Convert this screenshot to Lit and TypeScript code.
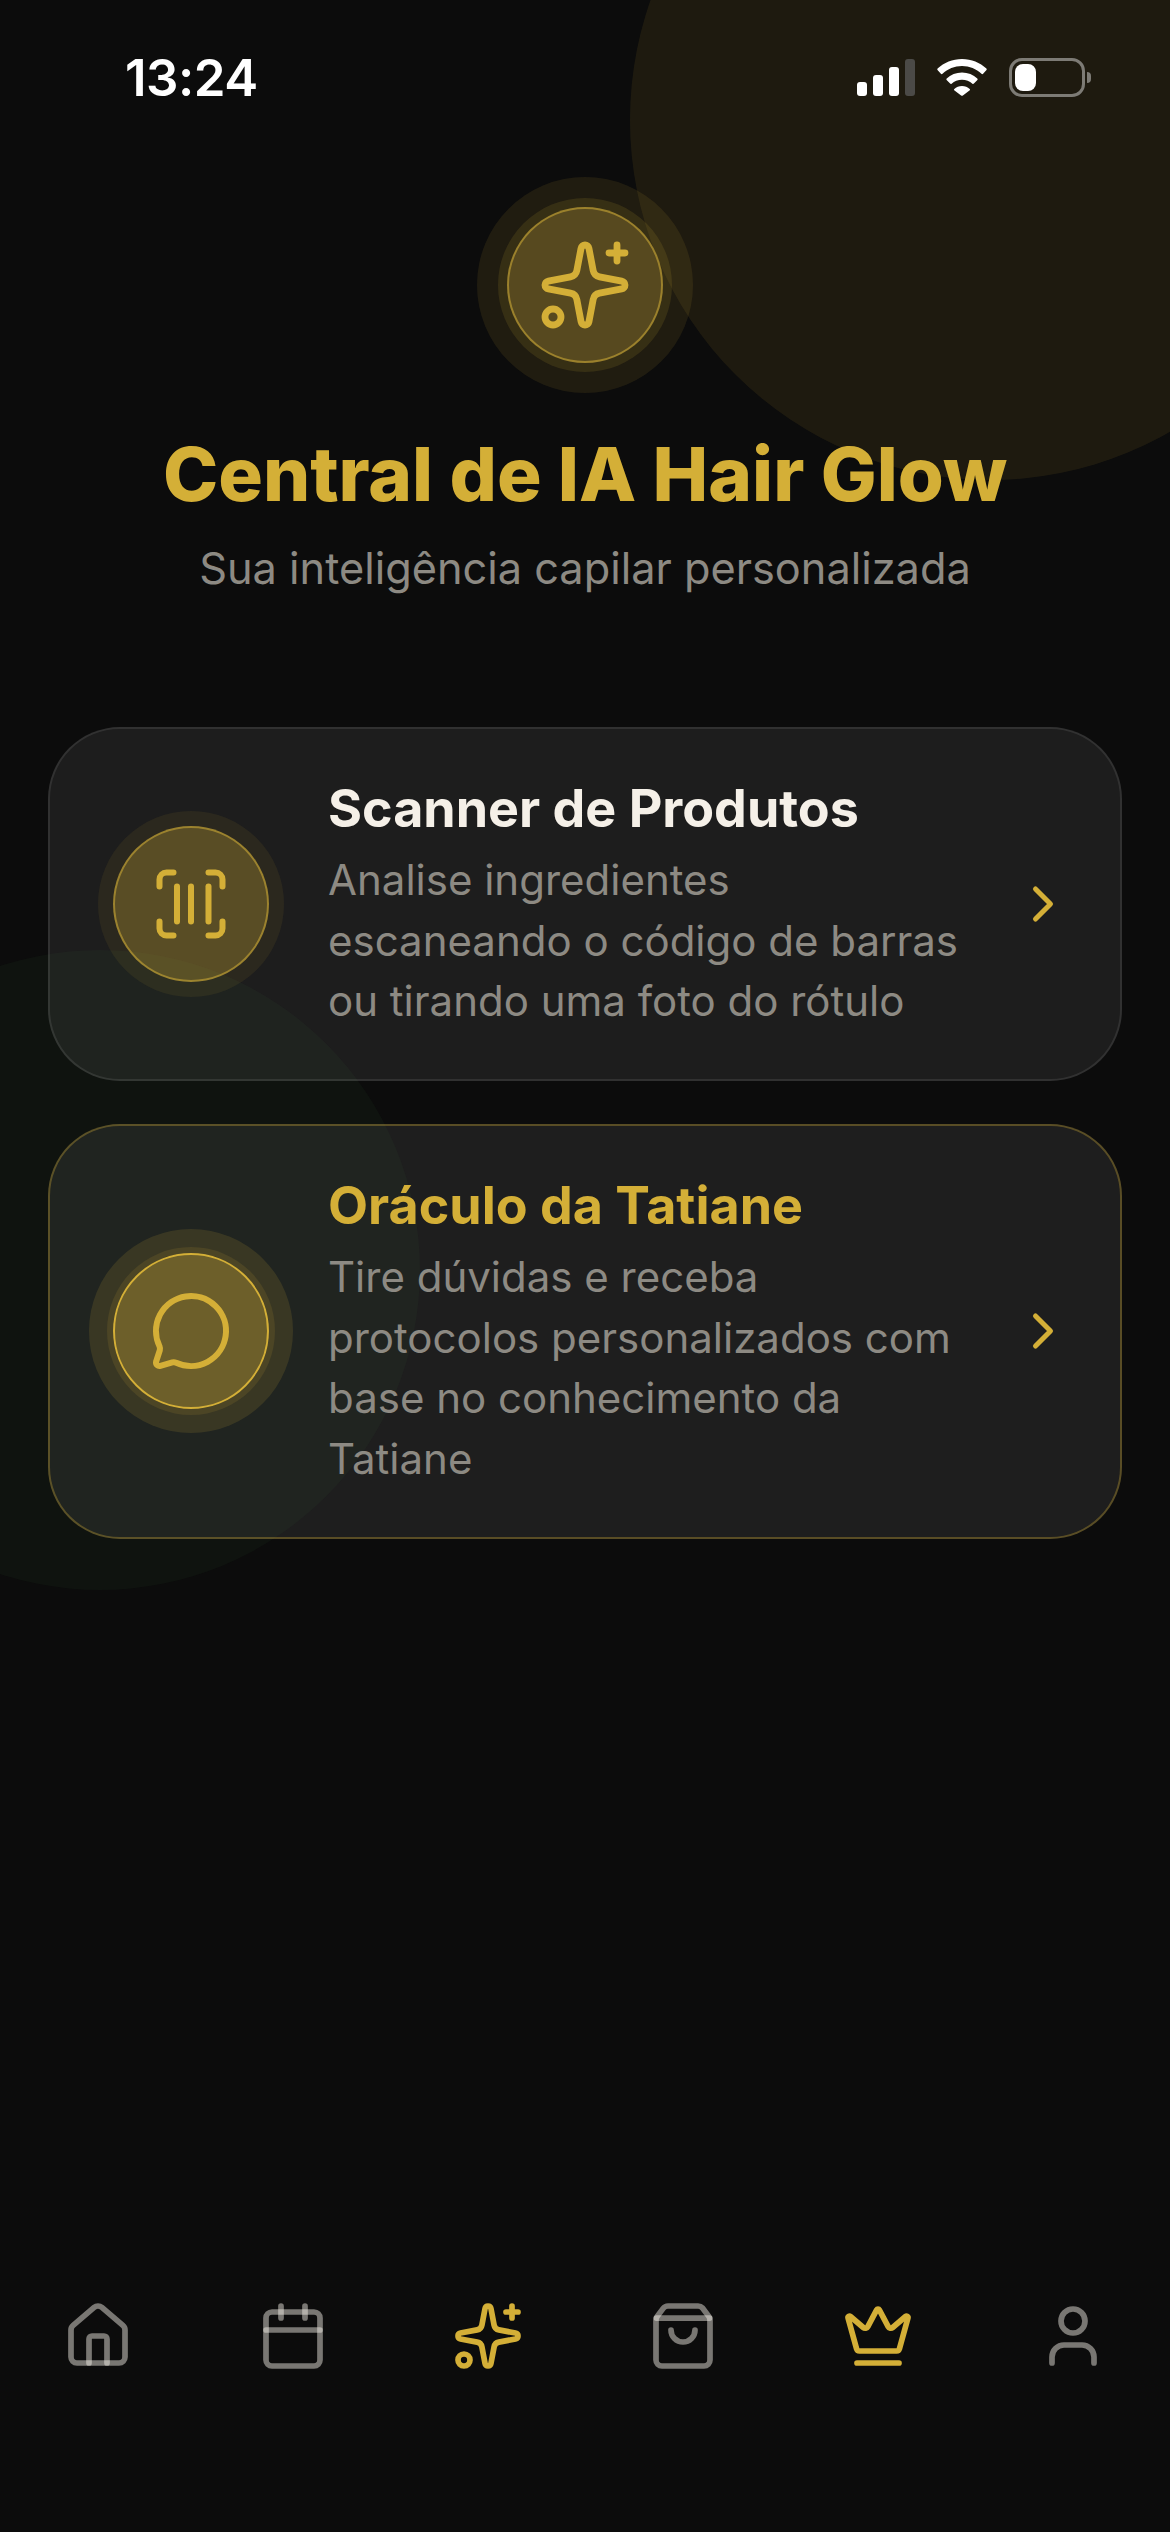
import { LitElement, html, css, svg } from "lit";
import { customElement } from "lit/decorators.js";

const sparkles = svg`<path d="M11.017 2.814a1 1 0 0 1 1.966 0l1.051 5.558a2 2 0 0 0 1.594 1.594l5.558 1.051a1 1 0 0 1 0 1.966l-5.558 1.051a2 2 0 0 0-1.594 1.594l-1.051 5.558a1 1 0 0 1-1.966 0l-1.051-5.558a2 2 0 0 0-1.594-1.594l-5.558-1.051a1 1 0 0 1 0-1.966l5.558-1.051a2 2 0 0 0 1.594-1.594z"/><path d="M20 2v4"/><path d="M22 4h-4"/><circle cx="4" cy="20" r="2"/>`;
const scan = svg`<path d="M3 7V5a2 2 0 0 1 2-2h2"/><path d="M17 3h2a2 2 0 0 1 2 2v2"/><path d="M21 17v2a2 2 0 0 1-2 2h-2"/><path d="M7 21H5a2 2 0 0 1-2-2v-2"/><path d="M8 7v10"/><path d="M12 7v10"/><path d="M17 7v10"/>`;
const chat = svg`<path d="M2.992 16.342a2 2 0 0 1 .094 1.167l-1.065 3.29a1 1 0 0 0 1.236 1.168l3.413-.998a2 2 0 0 1 1.099.092 10 10 0 1 0-4.777-4.719"/>`;
const chevron = svg`<path d="m9 18 6-6-6-6"/>`;
const house = svg`<path d="M15 21v-8a1 1 0 0 0-1-1h-4a1 1 0 0 0-1 1v8"/><path d="M3 10a2 2 0 0 1 .709-1.528l7-6a2 2 0 0 1 2.582 0l7 6A2 2 0 0 1 21 10v9a2 2 0 0 1-2 2H5a2 2 0 0 1-2-2z"/>`;
const calendar = svg`<path d="M8 2v4"/><path d="M16 2v4"/><rect width="18" height="18" x="3" y="4" rx="2"/><path d="M3 10h18"/>`;
const bag = svg`<path d="M16 10a4 4 0 0 1-8 0"/><path d="M3.103 6.034h17.794"/><path d="M3.4 5.467a2 2 0 0 0-.4 1.2V20a2 2 0 0 0 2 2h14a2 2 0 0 0 2-2V6.667a2 2 0 0 0-.4-1.2l-2.1-2.8A2 2 0 0 0 17 2H7a2 2 0 0 0-1.6.8z"/>`;
const crown = svg`<path d="M11.562 3.266a.5.5 0 0 1 .876 0L15.39 8.87a1 1 0 0 0 1.516.294L21.183 5.5a.5.5 0 0 1 .798.519l-2.834 10.246a1 1 0 0 1-.956.734H5.81a1 1 0 0 1-.957-.734L2.02 6.02a.5.5 0 0 1 .798-.519l4.276 3.664a1 1 0 0 0 1.516-.294z"/><path d="M5 21h14"/>`;
const user = svg`<path d="M19 21v-2a4 4 0 0 0-4-4H9a4 4 0 0 0-4 4v2"/><circle cx="12" cy="7" r="4"/>`;

const icon = (body: unknown, cls: string) =>
  html`<svg class=${cls} viewBox="0 0 24 24" fill="none" stroke-linecap="round" stroke-linejoin="round">${body}</svg>`;

@customElement("app-root")
export class AppRoot extends LitElement {
  static styles = css`
    :host {
      display: block;
    }
    .screen {
      position: relative;
      width: 1170px;
      height: 2532px;
      overflow: hidden;
      background: #0c0c0c;
      font-family: Inter, "Liberation Sans", sans-serif;
      display: flex;
      flex-direction: column;
    }
    .blob {
      position: absolute;
      border-radius: 50%;
    }
    .blob-gold {
      left: 630px;
      top: -240px;
      width: 720px;
      height: 720px;
      background: rgba(212, 175, 55, 0.095);
    }
    .blob-green {
      left: -220px;
      top: 950px;
      width: 640px;
      height: 640px;
      background: rgba(50, 110, 60, 0.075);
    }
    .status {
      position: relative;
      height: 154px;
      flex: none;
      box-sizing: border-box;
      padding: 55px 79px 0 125px;
      display: flex;
      justify-content: space-between;
      align-items: flex-start;
      color: #fff;
    }
    .time {
      font-size: 51px;
      line-height: 46px;
      font-weight: 600;
      letter-spacing: -0.5px;
    }
    .indicators {
      display: flex;
      align-items: center;
      padding-top: 3px;
    }
    .signal {
      display: flex;
      align-items: flex-end;
      gap: 6px;
      height: 37px;
    }
    .signal i {
      display: block;
      width: 10px;
      background: #fff;
      border-radius: 3px;
    }
    .signal i.off {
      background: #4b4a47;
    }
    .wifi {
      width: 50px;
      height: 37px;
      margin-left: 22px;
    }
    .battery {
      display: flex;
      align-items: center;
      margin-left: 22px;
    }
    .cell {
      box-sizing: border-box;
      width: 76px;
      height: 39px;
      border: 3px solid #7d7b75;
      border-radius: 13px;
      padding: 3px;
    }
    .cell b {
      display: block;
      width: 21px;
      height: 27px;
      background: #fff;
      border-radius: 8px;
    }
    .nub {
      width: 4px;
      height: 11px;
      margin-left: 2px;
      background: #7d7b75;
      border-radius: 0 6px 6px 0;
    }
    .hero {
      position: relative;
      display: flex;
      flex-direction: column;
      align-items: center;
      padding-top: 53px;
    }
    .badge {
      box-sizing: border-box;
      display: flex;
      align-items: center;
      justify-content: center;
      border-radius: 50%;
      flex: none;
      width: 156px;
      height: 156px;
    }
    .badge-hero {
      border: 2px solid rgba(212, 175, 55, 0.55);
      background: #57491f;
      box-shadow: 0 0 0 9px rgba(212, 175, 55, 0.13), 0 0 0 30px rgba(212, 175, 55, 0.1);
    }
    .badge-scan {
      border: 2px solid rgba(212, 175, 55, 0.55);
      background: rgba(212, 175, 55, 0.33);
      box-shadow: 0 0 0 15px rgba(212, 175, 55, 0.08);
    }
    .badge-chat {
      border: 2px solid #d4af37;
      background: rgba(212, 175, 55, 0.43);
      box-shadow: 0 0 0 6px rgba(212, 175, 55, 0.12), 0 0 0 24px rgba(212, 175, 55, 0.14);
    }
    svg {
      stroke: #d4af37;
      flex: none;
      display: block;
    }
    .i-hero {
      width: 96px;
      height: 96px;
      stroke-width: 1.7;
    }
    .i-card {
      width: 84px;
      height: 84px;
      stroke-width: 1.72;
    }
    .i-chev {
      width: 60px;
      height: 60px;
      stroke-width: 2;
    }
    .i-nav {
      width: 72px;
      height: 72px;
      stroke-width: 1.9;
      stroke: rgba(245, 240, 232, 0.47);
    }
    .i-nav-on {
      width: 72px;
      height: 72px;
      stroke-width: 1.9;
    }
    h1 {
      margin: 68px 0 0;
      font-size: 74.4px;
      line-height: 86px;
      font-weight: 800;
      color: #d4af37;
    }
    .sub {
      margin: 26px 0 0;
      font-size: 43.3px;
      line-height: 50px;
      color: #8d8a83;
    }
    .cards {
      position: relative;
      display: flex;
      flex-direction: column;
      gap: 43px;
      padding: 134px 48px 0;
    }
    .card {
      display: flex;
      align-items: center;
      padding: 47.25px 47px 47.25px 63px;
      border-radius: 72px;
      background: rgba(255, 255, 255, 0.07);
      border: 2px solid rgba(255, 255, 255, 0.09);
    }
    .card.on {
      border-color: rgba(212, 175, 55, 0.33);
      background: rgba(255, 255, 255, 0.075);
    }
    .copy {
      flex: 1;
      min-width: 0;
      margin: 0 46px 0 59px;
    }
    h2 {
      margin: 0 0 8px;
      font-size: 52px;
      line-height: 66px;
      font-weight: 700;
      color: #f5f0e8;
    }
    .on h2 {
      color: #d4af37;
    }
    .copy p {
      margin: 0;
      font-size: 42px;
      line-height: 60.5px;
      color: #8d8a83;
    }
    nav {
      position: relative;
      margin-top: auto;
      display: grid;
      grid-template-columns: repeat(6, 1fr);
      justify-items: center;
      padding-bottom: 160px;
    }
  `;

  render() {
    return html`<div class="screen">
      <div class="blob blob-gold"></div>
      <div class="blob blob-green"></div>

      <div class="status">
        <span class="time">13:24</span>
        <div class="indicators">
          <div class="signal">
            <i style="height:14px"></i><i style="height:21px"></i><i style="height:29px"></i><i class="off" style="height:37px"></i>
          </div>
          <svg class="wifi" viewBox="0 0 50 37" style="stroke:none">
            <path fill="#fff" d="M25 0C15.500 0 7 3.600.6 9.600c-.5.500-.5 1-.1 1.500l3.400 3.700c.5.500 1.100.500 1.600 0C10.700 10 17.500 7.100 25 7.100s14.300 2.900 19.500 7.700c.5.500 1.100.500 1.600 0l3.400-3.700c.4-.5.400-1-.1-1.500C43 3.600 34.500 0 25 0Z"/>
            <path fill="#fff" d="M25 13.500c-5.900 0-11.300 2.200-15.300 5.900-.5.500-.5 1-.1 1.500l3.500 3.700c.5.500 1 .500 1.500.100 2.700-2.400 6.400-3.900 10.400-3.900s7.700 1.500 10.400 3.900c.5.400 1 .400 1.500-.1l3.500-3.700c.4-.5.400-1-.1-1.500-4-3.700-9.400-5.900-15.300-5.900Z"/>
            <path fill="#fff" d="M25 27c-3 0-5.700 1.100-7.700 2.900-.5.500-.5 1-.1 1.400l6.900 5.100c.6.500 1.200.500 1.800 0l6.900-5.100c.4-.4.400-.9-.1-1.400-2-1.800-4.700-2.900-7.700-2.900Z"/>
          </svg>
          <div class="battery"><div class="cell"><b></b></div><div class="nub"></div></div>
        </div>
      </div>

      <div class="hero">
        <div class="badge badge-hero">${icon(sparkles, "i-hero")}</div>
        <h1>Central de IA Hair Glow</h1>
        <p class="sub">Sua inteligência capilar personalizada</p>
      </div>

      <div class="cards">
        <div class="card">
          <div class="badge badge-scan">${icon(scan, "i-card")}</div>
          <div class="copy">
            <h2>Scanner de Produtos</h2>
            <p>Analise ingredientes escaneando o código de barras ou tirando uma foto do rótulo</p>
          </div>
          ${icon(chevron, "i-chev")}
        </div>
        <div class="card on">
          <div class="badge badge-chat">${icon(chat, "i-card")}</div>
          <div class="copy">
            <h2>Oráculo da Tatiane</h2>
            <p>Tire dúvidas e receba protocolos personalizados com base no conhecimento da Tatiane</p>
          </div>
          ${icon(chevron, "i-chev")}
        </div>
      </div>

      <nav>
        ${icon(house, "i-nav")}
        ${icon(calendar, "i-nav")}
        ${icon(sparkles, "i-nav-on")}
        ${icon(bag, "i-nav")}
        ${icon(crown, "i-nav-on")}
        ${icon(user, "i-nav")}
      </nav>
    </div>`;
  }
}
